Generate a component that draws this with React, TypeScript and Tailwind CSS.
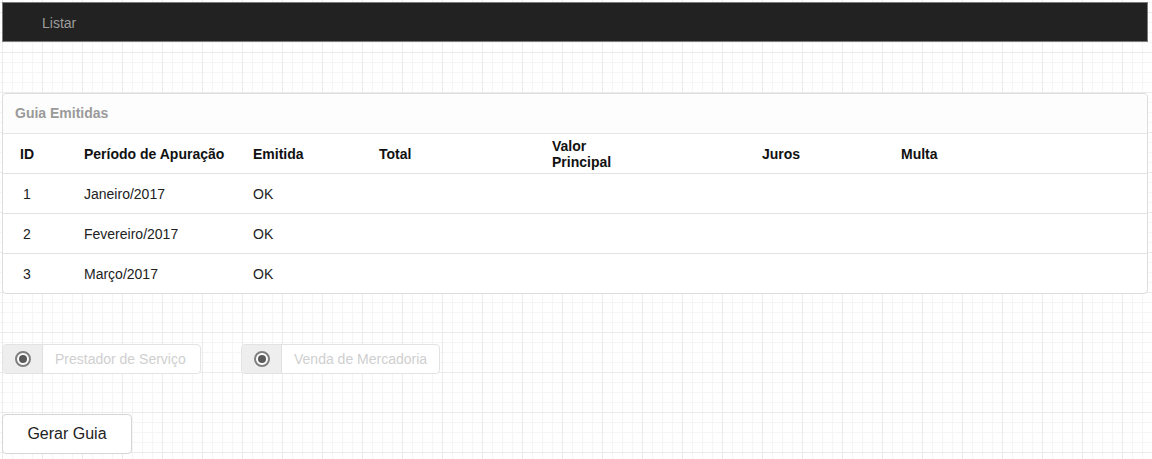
import React from "react";

const rows = [
  { id: "1", periodo: "Janeiro/2017", emitida: "OK" },
  { id: "2", periodo: "Fevereiro/2017", emitida: "OK" },
  { id: "3", periodo: "Março/2017", emitida: "OK" },
];

const cols = "grid grid-cols-[73px_169px_126px_173px_210px_139px_1fr] items-center";

function Radio() {
  return (
    <div className="w-[16px] h-[16px] rounded-full border-2 border-[#808080] bg-white flex items-center justify-center">
      <div className="w-[8px] h-[8px] rounded-full bg-[#5a5a5a]" />
    </div>
  );
}

function RadioBox({ label }: { label: string }) {
  return (
    <div className="w-[199px] h-[30px] border border-[#e3e3e3] rounded-[4px] flex overflow-hidden bg-white">
      <div className="w-[40px] h-full bg-[#eeeeee] border-r border-[#e0e0e0] flex items-center justify-center">
        <Radio />
      </div>
      <div className="flex-1 flex items-center pl-[12px] text-[14px] text-[#cfcfcf]">{label}</div>
    </div>
  );
}

export default function App() {
  return (
    <div className="min-h-[459px] bg-white bg-[image:linear-gradient(to_right,#ebebeb_1px,transparent_1px),linear-gradient(to_bottom,#ebebeb_1px,transparent_1px),linear-gradient(to_right,#f5f5f5_1px,transparent_1px),linear-gradient(to_bottom,#f5f5f5_1px,transparent_1px)] bg-[size:40px_40px,40px_40px,10px_10px,10px_10px] bg-[position:2px_12px,2px_12px,2px_12px,2px_12px] pt-[2px] pl-[2px] font-['Liberation_Sans',Arial,sans-serif]">
      <div className="w-[1146px]">
        <div className="h-[40px] bg-[#222222] border border-[#7a7a7a] flex items-center pl-[39px] pt-[2px] text-[14px] text-[#9d9d9d]">
          Listar
        </div>

        <div className="mt-[51px] border border-[#dddddd] rounded-[4px] bg-white">
          <div className="h-[40px] border-b border-[#e6e6e6] bg-[#fdfdfd] flex items-center pl-[12px] text-[14px] font-bold text-[#9a9a9a] rounded-t-[4px]">
            Guia Emitidas
          </div>
          <div className={`${cols} h-[40px] border-b border-[#e3e3e3] text-[14px] font-bold text-[#111] leading-[16px]`}>
            <div className="pl-[17px]">ID</div>
            <div className="pl-[8px]">Período de Apuração</div>
            <div className="pl-[8px]">Emitida</div>
            <div className="pl-[8px]">Total</div>
            <div className="pl-[8px]">
              Valor
              <br />
              Principal
            </div>
            <div className="pl-[8px]">Juros</div>
            <div className="pl-[8px]">Multa</div>
          </div>
          {rows.map((r, i) => (
            <div
              key={r.id}
              className={`${cols} ${i < rows.length - 1 ? "h-[40px] border-b border-[#e3e3e3]" : "h-[39px]"} pt-[2px] text-[14px] text-[#222]`}
            >
              <div className="pl-[20px]">{r.id}</div>
              <div className="pl-[8px]">{r.periodo}</div>
              <div className="pl-[8px]">{r.emitida}</div>
              <div />
              <div />
              <div />
              <div />
            </div>
          ))}
        </div>

        <div className="mt-[50px] flex gap-[40px]">
          <RadioBox label="Prestador de Serviço" />
          <RadioBox label="Venda de Mercadoria" />
        </div>

        <button className="mt-[40px] w-[130px] h-[40px] border border-[#d6d6d6] rounded-[4px] bg-white text-[16px] text-[#222] flex items-center justify-center">
          Gerar Guia
        </button>
      </div>
    </div>
  );
}
